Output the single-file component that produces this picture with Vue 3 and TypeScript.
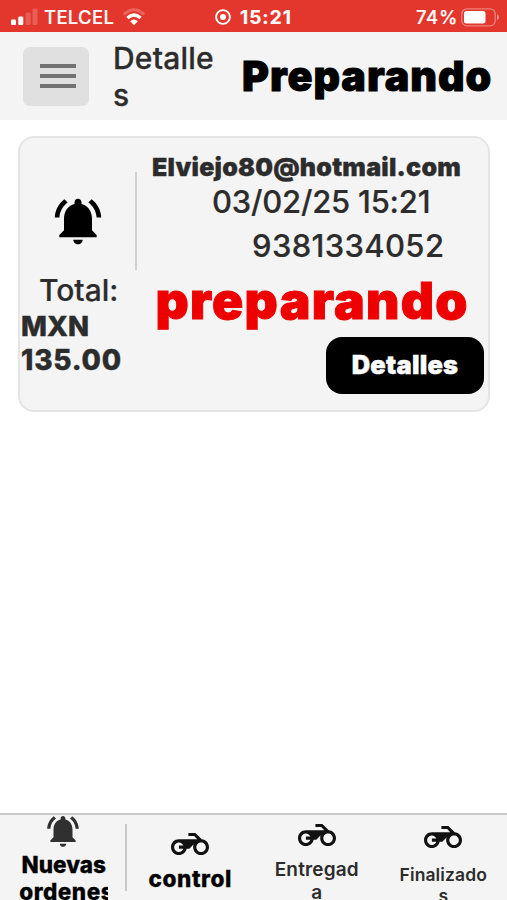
<script setup lang="ts">
interface Tab {
  id: string
  lines: string[]
  icon: 'bell' | 'moto'
}

const BELL =
  'M7.58 4.08L6.15 2.65C3.75 4.48 2.17 7.3 2.03 10.5h2c.15-2.65 1.51-4.97 3.55-6.42zm12.39 6.42h2c-.15-3.2-1.73-6.02-4.12-7.85l-1.42 1.43c2.02 1.45 3.39 3.77 3.54 6.42zM18 11c0-3.07-1.64-5.64-4.5-6.32V4c0-.83-.67-1.5-1.5-1.5s-1.5.67-1.5 1.5v.68C7.63 5.36 6 7.92 6 11v5l-2 2v1h16v-1l-2-2v-5zm-6 11c.14 0 .27-.01.4-.04.65-.14 1.18-.58 1.44-1.18.1-.24.15-.5.15-.78h-4c.01 1.1.9 2 2.01 2z'
const MOTO =
  'M19.44 9.03L15.41 5H11v2h3.59l2 2H5c-2.8 0-5 2.2-5 5s2.2 5 5 5c2.46 0 4.45-1.69 4.9-4h1.65l2.77-2.77c-.21.54-.32 1.14-.32 1.77 0 2.8 2.2 5 5 5s5-2.2 5-5c0-2.65-1.97-4.77-4.56-4.97zM7.82 15C7.4 16.15 6.28 17 5 17c-1.63 0-3-1.37-3-3s1.37-3 3-3c1.28 0 2.4.85 2.82 2H5v2h2.82zM19 17c-1.66 0-3-1.34-3-3s1.34-3 3-3 3 1.34 3 3-1.34 3-3 3z'

const order = {
  email: 'Elviejo80@hotmail.com',
  date: '03/02/25 15:21',
  phone: '9381334052',
  status: 'preparando',
  currency: 'MXN',
  amount: '135.00',
}

const tabs: Tab[] = [
  { id: 'nuevas', lines: ['Nuevas', 'ordenes'], icon: 'bell' },
  { id: 'control', lines: ['control'], icon: 'moto' },
  { id: 'entregada', lines: ['Entregad', 'a'], icon: 'moto' },
  { id: 'finalizados', lines: ['Finalizado', 's'], icon: 'moto' },
]
</script>

<template>
  <div class="screen">
    <div class="status-bar">
      <div class="carrier">
        <svg class="signal" width="27" height="17" viewBox="0 0 27 17">
          <rect x="0" y="11.5" width="5" height="5.5" rx="1.2" fill="#fff" />
          <rect x="7.3" y="8.5" width="5" height="8.5" rx="1.2" fill="#fff" />
          <rect x="14.6" y="4.5" width="5" height="12.5" rx="1.2" fill="#fff" opacity=".2" />
          <rect x="21.5" y="0.5" width="5" height="16.5" rx="1.2" fill="#fff" opacity=".2" />
        </svg>
        <span class="carrier-name">TELCEL</span>
        <svg class="wifi" width="24" height="18" viewBox="0 0 24 18" fill="none">
          <path d="M1.8 6.4Q12-3 22.2 6.4" stroke="#fff" stroke-width="3" opacity=".24" />
          <path d="M5.4 10Q12 4 18.6 10" stroke="#fff" stroke-width="3.2" />
          <path d="M8.2 13.2Q12 9.8 15.8 13.2L12 17.2z" fill="#fff" />
        </svg>
      </div>
      <div class="clock">
        <svg width="16" height="16" viewBox="0 0 16 16">
          <circle cx="8" cy="8" r="6.9" fill="none" stroke="#fff" stroke-width="1.9" />
          <circle cx="8" cy="8" r="3" fill="#fff" />
        </svg>
        <span>15:21</span>
      </div>
      <div class="battery">
        <span>74%</span>
        <svg width="38" height="19" viewBox="0 0 38 19">
          <rect x=".8" y=".8" width="33.4" height="17" rx="5" fill="none" stroke="#fff" stroke-width="1.3" opacity=".38" />
          <rect x="3" y="3" width="21.5" height="12.6" rx="2.5" fill="#fff" />
          <path d="M36 6.2Q38 7 38 9.2T36 12.2z" fill="#fff" opacity=".45" />
        </svg>
      </div>
    </div>

    <header class="toolbar">
      <button class="menu" aria-label="Menu"><i></i><i></i><i></i></button>
      <div class="crumb">Detalle<br />s</div>
      <h1 class="title">Preparando</h1>
    </header>

    <main class="content">
      <article class="card">
        <div class="left">
          <svg class="alert" viewBox="0 0 24 24"><path :d="BELL" /></svg>
          <div class="total">Total:</div>
          <div class="amount">
            <div>{{ order.currency }}</div>
            <div class="digits">{{ order.amount }}</div>
          </div>
        </div>
        <div class="rule"></div>
        <div class="right">
          <div class="email">{{ order.email }}</div>
          <div class="date">{{ order.date }}</div>
          <div class="phone">{{ order.phone }}</div>
          <div class="state">{{ order.status }}</div>
          <button class="details">Detalles</button>
        </div>
      </article>
    </main>

    <nav class="tabs">
      <a v-for="tab in tabs" :key="tab.id" class="tab" :class="tab.id">
        <svg class="tab-icon" viewBox="0 0 24 24"><path :d="tab.icon === 'bell' ? BELL : MOTO" /></svg>
        <span class="label"><span v-for="line in tab.lines" :key="line" class="line">{{ line }}</span></span>
      </a>
    </nav>
  </div>
</template>

<style>
body {
  background: #fff;
  overflow: hidden;
}
</style>

<style scoped>
* {
  box-sizing: border-box;
}
.screen {
  height: 900px;
  width: 507px;
  display: flex;
  flex-direction: column;
  overflow: hidden;
  font-family: Inter, 'Liberation Sans', sans-serif;
  color: #2c2c2c;
  white-space: nowrap;
}
button {
  border: 0;
  padding: 0;
  font: inherit;
}
.status-bar {
  height: 32px;
  flex: none;
  display: grid;
  grid-template-columns: 215px 1fr auto;
  align-items: center;
  background: #e3362c;
  color: #fff;
  font-size: 18.5px;
  font-weight: 550;
  line-height: 22px;
  padding: 2px 8px 0 11px;
  -webkit-text-stroke: 0.2px currentColor;
}
.carrier,
.clock,
.battery {
  display: flex;
  align-items: center;
}
.signal {
  margin-top: -2px;
}
.carrier-name {
  margin-left: 6px;
  width: 80px;
  letter-spacing: 0.3px;
}
.wifi {
  margin-top: -1px;
  margin-left: -2px;
}
.clock {
  gap: 9px;
  margin-left: -11px;
  font-weight: 700;
  font-size: 19px;
  letter-spacing: 1px;
}
.clock span {
  margin-top: 1px;
}
.battery {
  gap: 3px;
  letter-spacing: 0.7px;
}
.toolbar {
  height: 88px;
  flex: none;
  display: flex;
  background: #f4f4f4;
  padding-left: 23px;
}
.menu {
  width: 66px;
  height: 59px;
  margin-top: 14.5px;
  border-radius: 7px;
  background: #e0e0e0;
  display: flex;
  flex-direction: column;
  align-items: center;
  justify-content: center;
  gap: 6px;
}
.menu i {
  width: 36px;
  height: 4px;
  margin-left: 3px;
  background: #727272;
}
.crumb {
  width: 129px;
  padding: 8px 0 0 24px;
  font-size: 30px;
  font-weight: 550;
  line-height: 37px;
  letter-spacing: 0.2px;
  -webkit-text-stroke: 0.3px currentColor;
}
.title {
  margin: 20px 0 0 24px;
  font-size: 41.2px;
  line-height: 48px;
  font-weight: 900;
  letter-spacing: 0.95px;
  -webkit-text-stroke: 0.9px currentColor;
  color: #000;
}
.content {
  flex: 1;
  padding: 16px 17px 0 18px;
}
.card {
  height: 276px;
  display: grid;
  grid-template-columns: 115px 2px 1fr;
  border: 2px solid #e5e5e5;
  border-radius: 16px;
  background: #f4f4f4;
  overflow: hidden;
}
.alert {
  display: block;
  width: 56px;
  height: 56px;
  margin: 55px 0 0 29.5px;
  fill: #000;
}
.total {
  margin: 22.5px 0 0 19px;
  font-size: 30px;
  line-height: 36px;
  font-weight: 520;
  -webkit-text-stroke: 0.2px currentColor;
}
.amount {
  margin-top: 1.5px;
  padding-left: 1px;
  font-size: 27.5px;
  font-weight: 850;
  line-height: 34px;
  -webkit-text-stroke: 0.4px currentColor;
}
.digits {
  font-size: 28px;
  letter-spacing: 0.8px;
}
.rule {
  height: 98px;
  margin-top: 34px;
  background: #cfcfcf;
}
.right {
  display: flex;
  flex-direction: column;
  align-items: flex-start;
}
.email {
  margin: 14px 0 0 15px;
  font-size: 25px;
  line-height: 30px;
  font-weight: 900;
  letter-spacing: 0.22px;
  -webkit-text-stroke: 0.3px currentColor;
}
.date {
  margin: 0 0 0 75px;
  font-size: 31px;
  line-height: 40px;
  font-weight: 530;
  letter-spacing: -0.22px;
  -webkit-text-stroke: 0.2px currentColor;
}
.phone {
  margin: 4px 0 0 115px;
  font-size: 31px;
  line-height: 40px;
  font-weight: 530;
  letter-spacing: 0.35px;
  -webkit-text-stroke: 0.2px currentColor;
}
.state {
  margin: 6px 0 0 18.5px;
  font-size: 51.5px;
  line-height: 56px;
  font-weight: 900;
  letter-spacing: 1.3px;
  -webkit-text-stroke: 1px currentColor;
  color: #ee0000;
}
.details {
  margin: 9px 4px 0 auto;
  padding-bottom: 2px;
  width: 158px;
  height: 57px;
  border-radius: 16px;
  background: #000;
  color: #fff;
  font-size: 25.5px;
  font-weight: 900;
  letter-spacing: 0.2px;
  -webkit-text-stroke: 0.4px currentColor;
}
.tabs {
  height: 87px;
  flex: none;
  display: grid;
  grid-template-columns: repeat(4, 126.5px);
  padding-left: 0.5px;
  border-top: 2px solid #c9c9c9;
  background: #f4f4f4;
  overflow: hidden;
}
.tab {
  display: flex;
  flex-direction: column;
  align-items: center;
  height: 100px;
  color: #2c2c2c;
}
.tab-icon {
  flex: none;
  width: 38px;
  height: 38px;
  fill: #111;
}
.line {
  display: block;
  text-align: center;
}
.nuevas {
  position: relative;
}
.nuevas::after {
  content: '';
  position: absolute;
  top: 9px;
  right: 0;
  width: 2px;
  height: 67px;
  background: #c9c9c9;
}
.nuevas .tab-icon {
  fill: #303030;
  margin: -3px 0 0 -1px;
}
.nuevas .label {
  width: 89px;
  overflow: hidden;
  color: #000;
  font-size: 22.5px;
  font-weight: 850;
  line-height: 27px;
  margin-top: 1px;
  -webkit-text-stroke: 0.3px currentColor;
}
.nuevas .line:last-child {
  text-align: left;
  letter-spacing: 0.5px;
}
.control .tab-icon {
  margin-top: 10px;
}
.control .label {
  margin-top: 2px;
  color: #000;
  font-size: 22.5px;
  line-height: 28px;
  font-weight: 850;
  letter-spacing: 0.6px;
  -webkit-text-stroke: 0.3px currentColor;
}
.entregada .tab-icon {
  margin-top: 1px;
}
.entregada .label {
  margin-top: 4px;
  font-size: 19px;
  line-height: 23px;
  font-weight: 600;
  letter-spacing: 0.15px;
}
.finalizados .tab-icon {
  margin-top: 3px;
}
.finalizados .label {
  margin-top: 8px;
  font-size: 17.5px;
  line-height: 21px;
  font-weight: 600;
  letter-spacing: 0.1px;
}
</style>
